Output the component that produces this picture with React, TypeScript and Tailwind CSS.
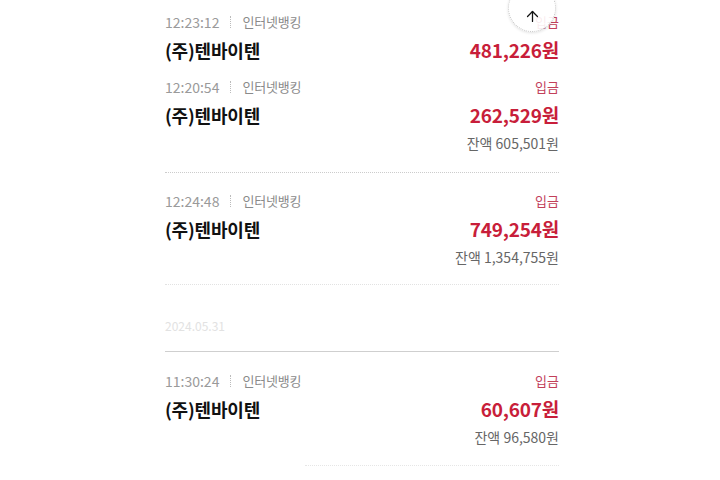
import { ArrowUp } from 'lucide-react'

interface Tx { time: string; amount: string; balance?: string }

const font = { fontFamily: '"Noto Sans CJK KR", "Noto Sans", sans-serif' }

function TxItem({ tx, className = '' }: { tx: Tx; className?: string }) {
  return (
    <div className={className}>
      <div className="flex h-[28px] items-center justify-between text-[13px]">
        <div className="flex items-center text-[#8a8a8a]">
          <span className="text-[14px] text-[#9a9a9a]">{tx.time}</span>
          <span className="mx-[11px] h-[12px] border-l border-dotted border-[#bbb]" />
          <span className="tracking-[-0.2px]">인터넷뱅킹</span>
        </div>
        <span className="text-[#c2405a]">입금</span>
      </div>
      <div className="flex h-[28px] items-center justify-between">
        <span className="text-[18px] font-bold tracking-[-0.2px] text-[#111]">(주)텐바이텐</span>
        <span className="text-[19px] font-bold tracking-[-0.2px] text-[#c81e3a]">{tx.amount}</span>
      </div>
      {tx.balance && (
        <div className="flex h-[28px] items-center justify-end text-[14px] text-[#666]">
          잔액 {tx.balance}
        </div>
      )}
    </div>
  )
}

export default function App() {
  return (
    <div className="relative h-[480px] w-[720px] overflow-hidden bg-white" style={font}>
      <div className="ml-[165px] w-[394px]">
        <TxItem tx={{ time: '12:23:12', amount: '481,226원' }} className="pt-[8px]" />
        <TxItem tx={{ time: '12:20:54', amount: '262,529원', balance: '605,501원' }} className="mt-[9px]" />
        <div className="mt-[15px] border-t border-dotted border-[#ccc]" />
        <TxItem tx={{ time: '12:24:48', amount: '749,254원', balance: '1,354,755원' }} className="mt-[14px]" />
        <div className="mt-[13px] border-t border-dotted border-[#e2e2e2]" />
        <div className="mt-[35px] h-[12px] text-[12px] leading-[12px] text-[#e2e2e2]">2024.05.31</div>
        <div className="mt-[19px] border-t border-[#cfcfcf]" />
        <TxItem tx={{ time: '11:30:24', amount: '60,607원', balance: '96,580원' }} className="mt-[15px]" />
        <div className="ml-[140px] mt-[14px] border-t border-dotted border-[#e6e6e6]" />
      </div>
      <button className="absolute left-[508px] top-[-16px] flex h-[48px] w-[48px] items-end justify-center rounded-full border border-dotted border-[#c4c4c4] bg-white/90 pb-[6px] shadow-[0_1px_3px_rgba(0,0,0,0.12)]">
        <ArrowUp size={17} strokeWidth={1.8} className="text-[#111]" />
      </button>
    </div>
  )
}
